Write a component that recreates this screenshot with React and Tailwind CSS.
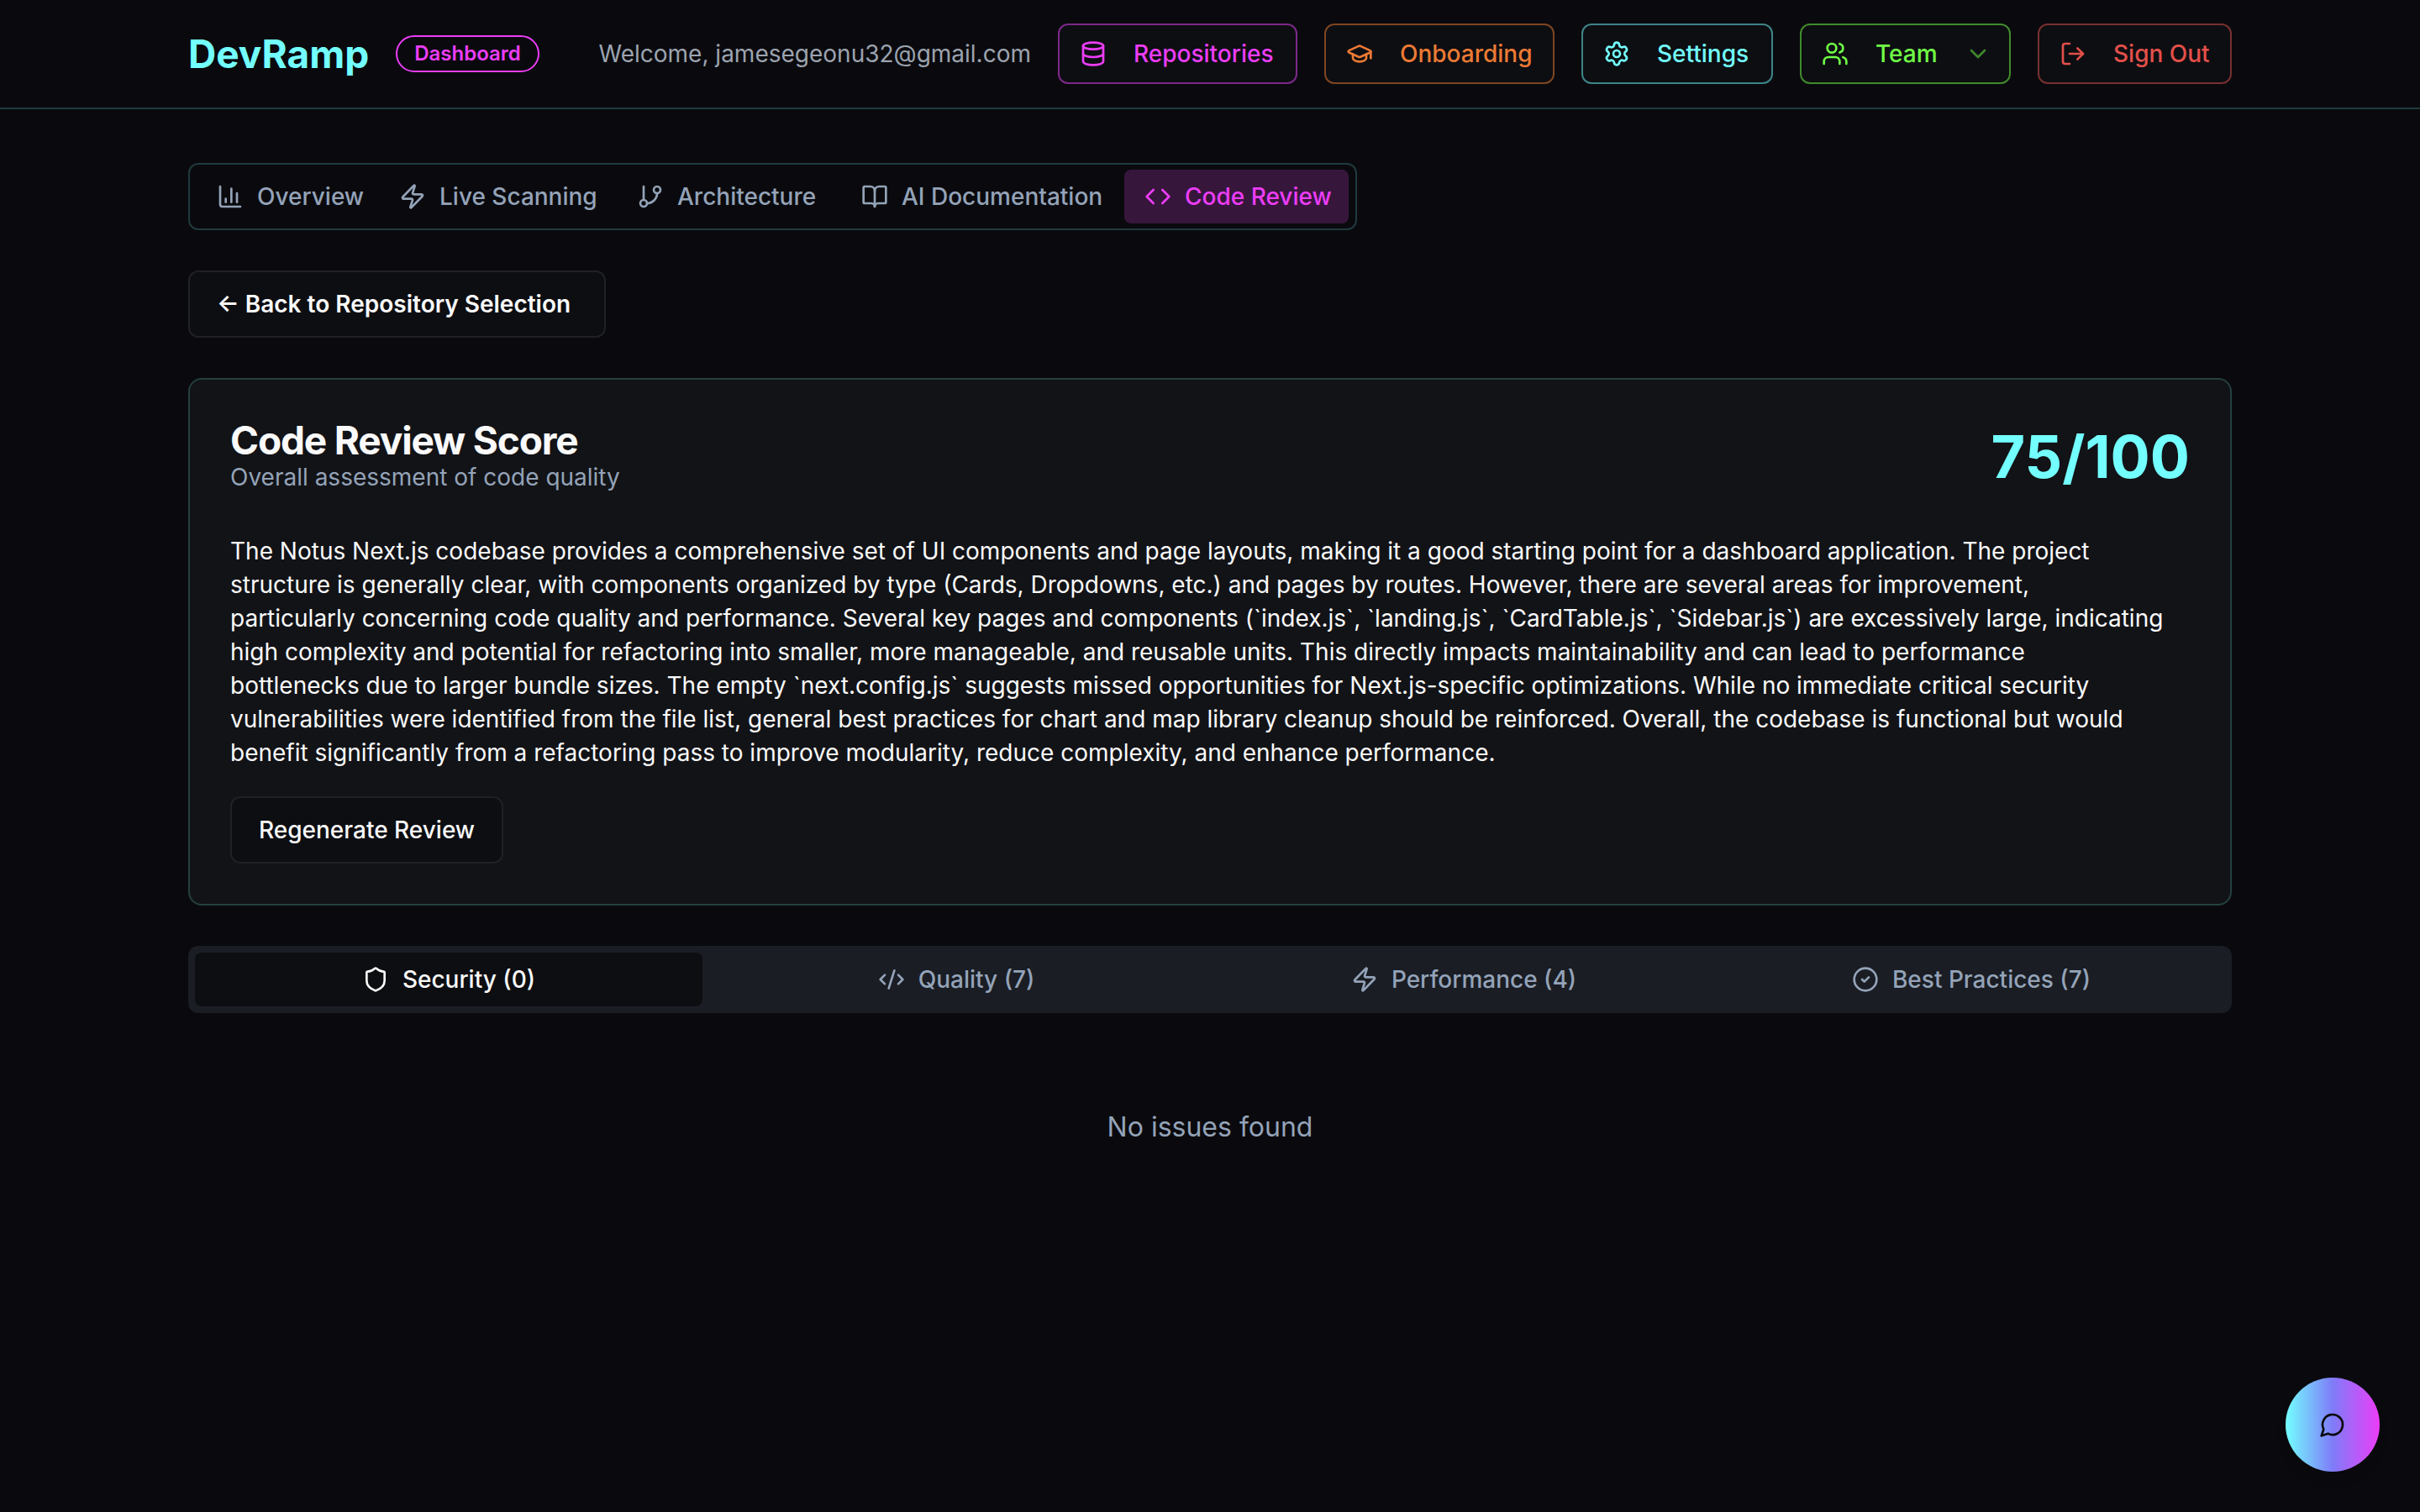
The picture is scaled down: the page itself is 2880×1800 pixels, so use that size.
import React, { useState } from "react";
import {
  BookOpen,
  ChartColumn,
  ChevronDown,
  CircleCheck,
  Code,
  CodeXml,
  Database,
  GitBranch,
  GraduationCap,
  LogOut,
  Settings,
  Shield,
  Users,
  Zap,
} from "lucide-react";

const navButtons = [
  { label: "Repositories", icon: Database, style: "w-[285px] border-[#7d2889] text-[#ec3df8]" },
  { label: "Onboarding", icon: GraduationCap, style: "w-[274px] border-[#7e4522] text-[#ec7a34]" },
  { label: "Settings", icon: Settings, style: "w-[228px] border-[#3e8488] text-[#73ffff]" },
  { label: "Team", icon: Users, style: "w-[251px] border-[#408a2c] text-[#70ff46]", menu: true },
  { label: "Sign Out", icon: LogOut, style: "w-[231px] border-[#77302f] text-[#e3504a]" },
];

const pageTabs = [
  { label: "Overview", icon: ChartColumn, width: "w-[217px]" },
  { label: "Live Scanning", icon: Zap, width: "w-[283px]" },
  { label: "Architecture", icon: GitBranch, width: "w-[267px]" },
  { label: "AI Documentation", icon: BookOpen, width: "w-[337px]" },
  { label: "Code Review", icon: Code, width: "w-[267px]" },
];

const issueTabs = [
  { label: "Security", count: 0, icon: Shield },
  { label: "Quality", count: 7, icon: CodeXml },
  { label: "Performance", count: 4, icon: Zap },
  { label: "Best Practices", count: 7, icon: CircleCheck },
];

const summary = [
  "The Notus Next.js codebase provides a comprehensive set of UI components and page layouts, making it a good starting point for a dashboard application. The project",
  "structure is generally clear, with components organized by type (Cards, Dropdowns, etc.) and pages by routes. However, there are several areas for improvement,",
  "particularly concerning code quality and performance. Several key pages and components (`index.js`, `landing.js`, `CardTable.js`, `Sidebar.js`) are excessively large, indicating",
  "high complexity and potential for refactoring into smaller, more manageable, and reusable units. This directly impacts maintainability and can lead to performance",
  "bottlenecks due to larger bundle sizes. The empty `next.config.js` suggests missed opportunities for Next.js-specific optimizations. While no immediate critical security",
  "vulnerabilities were identified from the file list, general best practices for chart and map library cleanup should be reinforced. Overall, the codebase is functional but would",
  "benefit significantly from a refactoring pass to improve modularity, reduce complexity, and enhance performance.",
];

function Header() {
  return (
    <header className="border-b-2 border-[#203a3d]">
      <div className="max-w-[2560px] h-32 mx-auto px-16 flex items-center justify-between">
        <div className="flex items-center gap-8">
          <a href="#" className="text-[46px] leading-[64px] font-bold text-[#73ffff]">DevRamp</a>
          <span className="h-11 px-5 flex items-center rounded-full border-2 border-[#ec3df8] text-[24px] leading-8 font-semibold text-[#ec3df8]">
            Dashboard
          </span>
        </div>

        <div className="flex items-center gap-8">
          <span className="text-[28px] leading-10 text-[#9ca3af]">Welcome, jamesegeonu32@gmail.com</span>
          {navButtons.map(({ label, icon: Icon, style, menu }) => (
            <button
              key={label}
              type="button"
              className={`h-18 px-6 flex items-center gap-8 rounded-xl border-2 bg-[#0d0e12] text-[28px] leading-10 font-medium whitespace-nowrap ${style}`}
            >
              <Icon className="size-8 shrink-0" />
              {label}
              {menu && <ChevronDown className="size-8 shrink-0 opacity-50" />}
            </button>
          ))}
        </div>
      </div>
    </header>
  );
}

function ChatButton() {
  return (
    <button
      type="button"
      aria-label="Open chat"
      className="fixed right-12 bottom-12 size-28 flex items-center justify-center rounded-full bg-linear-to-r/srgb from-[#73ffff] via-[#7f7cf8] to-[#ec3df8] text-[#0a0a0e] shadow-lg"
    >
      <svg className="size-8" viewBox="0 0 24 24" fill="none" stroke="currentColor" strokeWidth="2" strokeLinecap="round" strokeLinejoin="round">
        <path d="M7.9 20A9 9 0 1 0 4 16.1L2 22Z" />
      </svg>
    </button>
  );
}

function App() {
  const [pageTab, setPageTab] = useState("Code Review");
  const [issueTab, setIssueTab] = useState("Security");

  return (
    <div className="min-h-screen bg-[#0a0a0e] text-[#fafafa] font-['Inter',sans-serif]">
      <Header />

      <main className="max-w-[2560px] mx-auto px-16 pt-16 pb-16 flex flex-col items-start gap-12">
        <div role="tablist" className="h-20 px-2 flex items-center rounded-xl border-2 border-[#203a3d]">
          {pageTabs.map(({ label, icon: Icon, width }) => (
            <button
              key={label}
              type="button"
              role="tab"
              aria-selected={pageTab === label}
              onClick={() => setPageTab(label)}
              className={`h-16 px-6 flex items-center gap-4 rounded-lg text-[28px] leading-10 font-medium whitespace-nowrap ${width} ${
                pageTab === label ? "bg-[#37163c] text-[#ec3df8]" : "text-[#94a3b8]"
              }`}
            >
              <Icon className="size-8 shrink-0" />
              {label}
            </button>
          ))}
        </div>

        <button type="button" className="w-[497px] h-20 px-8 text-left rounded-xl border-2 border-[#1f2126] bg-[#0d0e12] text-[28px] leading-10 font-semibold">
          ← Back to Repository Selection
        </button>

        {/* Score card */}
        <section className="w-full p-12 rounded-2xl border-2 border-[#24403f] bg-[#121317]">
          <div className="flex items-center justify-between mb-12">
            <div>
              <h1 className="text-[46px] leading-[48px] font-bold tracking-tight">Code Review Score</h1>
              <p className="text-[28px] leading-10 text-[#94a3b8]">Overall assessment of code quality</p>
            </div>
            <div className="text-[70px] leading-[80px] font-bold text-[#73ffff]">75/100</div>
          </div>

          <p className="text-[28px] leading-10 whitespace-nowrap">
            {summary.map((line) => (
              <span key={line} className="block">{line}</span>
            ))}
          </p>

          <button type="button" className="h-20 mt-8 px-8 rounded-xl border-2 border-[#1f2126] bg-[#0d0e12] text-[28px] leading-10 font-medium">
            Regenerate Review
          </button>
        </section>

        <div className="w-full">
          <div role="tablist" className="p-2 grid grid-cols-4 rounded-xl bg-[#1a1d24]">
            {issueTabs.map(({ label, count, icon: Icon }) => (
              <button
                key={label}
                type="button"
                role="tab"
                aria-selected={issueTab === label}
                onClick={() => setIssueTab(label)}
                className={`h-16 flex items-center justify-center gap-4 rounded-lg text-[28px] leading-10 font-medium ${
                  issueTab === label ? "bg-[#0d0e12]" : "text-[#94a3b8]"
                }`}
              >
                <Icon className="size-8" />
                {label} ({count})
              </button>
            ))}
          </div>

          <p className="pt-28 text-center text-[32px] leading-12 text-[#94a3b8]">No issues found</p>
        </div>
      </main>

      <ChatButton />
    </div>
  );
}

export default App;
